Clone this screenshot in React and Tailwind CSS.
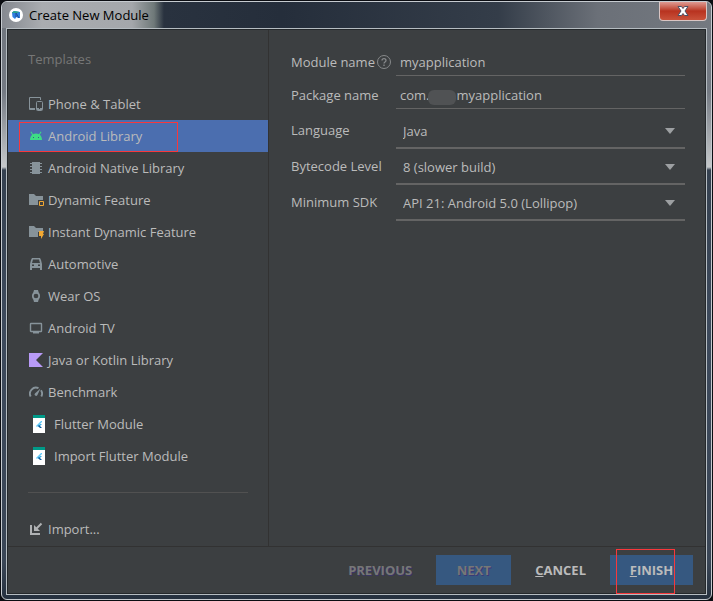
import React from "react";

const grey = "#87939a";

function PhoneTabletIcon() {
  return (
    <svg width="14" height="14" viewBox="0 0 14 14" fill="none">
      <path d="M.5 11V.5h11V3" stroke={grey} />
      <path d="M0 11h6v2H1a1 1 0 0 1-1-1z" fill={grey} />
      <rect x="7.500" y="4.500" width="6" height="9" rx="1" stroke={grey} />
      <path d="M8 11h5v2H8z" fill={grey} />
      <path d="M10 11h1v1h-1z" fill="#3c3f41" />
    </svg>
  );
}

function AndroidIcon() {
  return (
    <svg width="14" height="14" viewBox="0 0 14 14">
      <path d="M1 11c0-2 .8-4 2.200-5.200L1.500 3l.8-.5L4 5.200c1.800-.9 4.200-.9 6 0l1.700-2.700.8.5-1.700 2.800C12.200 7 13 9 13 11z" fill="#3ddc84" />
      <path d="M4 8h1v1H4zM9 8h1v1H9z" fill="#35598f" />
    </svg>
  );
}

function ChipIcon() {
  return (
    <svg width="14" height="14" viewBox="0 0 14 14" fill={grey}>
      <path d="M3 1h8v12H3z" />
      <path d="M1 2h12v1H1zM1 5h12v1H1zM1 8h12v1H1zM1 11h12v1H1z" />
    </svg>
  );
}

function FolderIcon({ instant }) {
  return (
    <svg width="15" height="14" viewBox="0 0 15 14" className="shrink-0">
      <path d="M0 1h5l2 2h7v4H9v5H0z" fill={grey} />
      {instant ? (
        <path d="M10 6h5l-1 3h1l-3 5v-3h-2z" fill="#f0a732" />
      ) : (
        <path d="M10.500 8.500h4v4h-4z" fill="none" stroke="#f0a732" />
      )}
    </svg>
  );
}

function CarIcon() {
  return (
    <svg width="14" height="14" viewBox="0 0 14 14">
      <path
        fill={grey}
        fillRule="evenodd"
        d="M3 1h8l1 2 1 4v6h-2v-2H3v2H1V7l1-4zM4 2.500L3 6h8l-1-3.500zM3 7.500v1.500h2V7.500zM9 7.500v1.500h2V7.500z"
      />
    </svg>
  );
}

function WatchIcon() {
  return (
    <svg width="14" height="14" viewBox="0 0 14 14">
      <path d="M5 1h4l.8 3H4.200zM5 13h4l.8-3H4.200z" fill={grey} />
      <circle cx="7" cy="7" r="3.200" fill="#3c3f41" stroke={grey} strokeWidth="1.700" />
    </svg>
  );
}

function TvIcon() {
  return (
    <svg width="14" height="14" viewBox="0 0 14 14">
      <rect x="1.500" y="2.500" width="11" height="8" rx=".5" fill="none" stroke={grey} strokeWidth="1.400" />
      <path d="M4 11h6v1.500H4z" fill={grey} />
    </svg>
  );
}

function KotlinIcon() {
  return (
    <svg width="14" height="14" viewBox="0 0 14 14">
      <path d="M0 0h14L7 7l7 7H0z" fill="#b99bf8" />
    </svg>
  );
}

function GaugeIcon() {
  return (
    <svg width="14" height="14" viewBox="0 0 14 14" fill="none">
      <path d="M1.700 11.500A6 6 0 0 1 9.500 3.200M12 5.200a6 6 0 0 1 .3 6.300" stroke={grey} strokeWidth="1.900" />
      <path d="M11.500 3.500L8.300 10.300a1.500 1.500 0 0 1-2.400-1.900z" fill={grey} />
    </svg>
  );
}

function FlutterIcon() {
  return (
    <svg width="12" height="18" viewBox="0 0 12 18">
      <path d="M0 0h12v18H0z" fill="#fff" />
      <path d="M0 0h12v3H0z" fill="#009a88" />
      <path d="M8 6L3 11l1 1 5-5V6z" fill="#5fc9f8" />
      <path d="M7 9l-2 2 1 1 3-3z" fill="#3ab0e6" />
      <path d="M5 11l2 2h2l-2-2-1-1z" fill="#0d5a9c" />
    </svg>
  );
}

function ImportIcon() {
  return (
    <svg width="14" height="14" viewBox="0 0 14 14" fill="none">
      <path d="M2 3v9h9" stroke="#afb1b3" strokeWidth="2" />
      <path d="M12.500 1.500L7 7" stroke="#afb1b3" strokeWidth="2" />
      <path d="M5 3v6h6z" fill="#afb1b3" />
    </svg>
  );
}

const templates = [
  { name: "Phone & Tablet", Icon: PhoneTabletIcon },
  { name: "Android Library", Icon: AndroidIcon, selected: true },
  { name: "Android Native Library", Icon: ChipIcon },
  { name: "Dynamic Feature", Icon: FolderIcon },
  { name: "Instant Dynamic Feature", Icon: FolderIcon, instant: true },
  { name: "Automotive", Icon: CarIcon },
  { name: "Wear OS", Icon: WatchIcon },
  { name: "Android TV", Icon: TvIcon },
  { name: "Java or Kotlin Library", Icon: KotlinIcon },
  { name: "Benchmark", Icon: GaugeIcon },
  { name: "Flutter Module", Icon: FlutterIcon, wide: true },
  { name: "Import Flutter Module", Icon: FlutterIcon, wide: true },
];

function TemplateRow({ name, Icon, selected, instant, wide }) {
  return (
    <li>
      <button
        type="button"
        className={
          "relative flex h-8 w-full items-center pl-5 text-left " + (selected ? "bg-[#4b6eaf]" : "")
        }
      >
        <span className={"flex shrink-0 " + (wide ? "w-[26px] pl-[5px]" : "w-5 pl-px")}>
          <Icon instant={instant} />
        </span>
        {name}
        {selected && (
          <span className="absolute top-0.5 bottom-0 left-[11px] w-[159px] border border-[#f8383c]" />
        )}
      </button>
    </li>
  );
}

function SelectRow({ id, label, value }) {
  return (
    <div className="flex items-start">
      <label htmlFor={id} className="w-[105px] shrink-0 leading-[30px]">
        {label}
      </label>
      <div className="relative flex-1">
        <select
          id={id}
          defaultValue={value}
          className="block h-[34px] w-full appearance-none border-b-2 border-[#646464] bg-transparent pb-px pl-[7px] outline-none"
        >
          <option>{value}</option>
        </select>
        <svg className="pointer-events-none absolute top-[13px] right-[10px]" width="10" height="6" viewBox="0 0 10 6">
          <path d="M0 0h10L5 6z" fill="#9da0a2" />
        </svg>
      </div>
    </div>
  );
}

const inputClass =
  "block h-[26px] w-full border-b border-[#646464] bg-transparent pb-px pl-1 outline-none";

export default function App() {
  return (
    <div className="flex min-h-screen flex-col bg-[#0b0d12] p-px font-['Open_Sans',sans-serif] text-[13px] leading-5 text-[#bbbbbb]">
      <div className="flex flex-1 flex-col rounded-md border border-[#c6cbd0] bg-[linear-gradient(to_bottom,#6f757d_0px,#747a83_90px,#c5c8ca_165px,#354150_168px,#3d4a5c_320px,#3a4656_560px,#25303e_100%)] px-1 pb-1">
        <header className="-mx-1 flex h-[26px] items-center rounded-t-md bg-[linear-gradient(to_right,#858990_0px,#a9acb0_40px,#a4a7ab_130px,#6f7979_152px,#29323f_162px,#252e3b_280px,#343d49_70%,#6b7078_84%,#747980_100%)] pl-[7px]">
          <svg width="14" height="14" viewBox="0 0 14 14">
            <circle cx="7" cy="7" r="7" fill="#fff" />
            <path d="M3 4.500L5 3l6 1v6H9L7.500 9 6 11 3.500 9z" fill="#2f7fe0" />
            <path d="M3 4.500L5 3l5 .8-1 1.200H3z" fill="#2ba38d" />
            <path d="M7 5l3 5M7 5v4" stroke="#1f4f99" />
          </svg>
          <h1 className="pl-1.5 text-black">Create New Module</h1>
          <button
            type="button"
            aria-label="Close"
            className="mr-1 ml-auto flex h-[19px] w-12 items-center justify-center self-start rounded-b border border-t-0 border-[#d9c5c3] bg-linear-to-b from-[#dd9a92] from-0% via-[#b8321f] via-50% to-[#c9513a]"
          >
            <svg width="12" height="10" viewBox="0 0 12 10">
              <path d="M1 .5h3.500L6 2.500 7.500.5H11L8 5l3 4.500H7.500L6 7.500 4.500 9.500H1L4 5z" fill="#fff" stroke="#4b4f63" />
            </svg>
          </button>
        </header>

        <div className="flex flex-1 flex-col border border-[#b5bcc1]">
          <div className="flex flex-1 flex-col border border-[#24282b] bg-[#3c3f41]">
            <div className="flex flex-1">
              <nav aria-label="Templates" className="flex w-[261px] shrink-0 flex-col border-r border-[#323232]">
                <h2 className="mt-[19px] pl-5 text-[#777777]">Templates</h2>
                <ul className="mt-[19px]">
                  {templates.map((t) => (
                    <TemplateRow key={t.name} {...t} />
                  ))}
                </ul>
                <hr className="mx-5 mt-5 border-[#515151]" />
                <button type="button" className="mt-5 flex h-8 items-center pl-5">
                  <span className="flex w-5 pl-px">
                    <ImportIcon />
                  </span>
                  Import...
                </button>
              </nav>

              <form className="flex-1 pt-5 pr-5 pl-[22px]">
                <div className="flex items-start">
                  <label htmlFor="module" className="flex h-6 w-[105px] shrink-0 items-center gap-0.5">
                    Module name
                    <svg width="14" height="14" viewBox="0 0 14 14" fill="none" stroke="#87898b" className="shrink-0">
                      <circle cx="7" cy="7" r="6.500" />
                      <path d="M5 5.500c0-2.600 4-2.600 4 0C9 7 7 7 7 8.500M7 9.500V11" strokeWidth="1.300" />
                    </svg>
                  </label>
                  <div className="flex-1">
                    <input id="module" defaultValue="myapplication" className={inputClass} />
                  </div>
                </div>
                <div className="mt-[7px] flex items-start">
                  <label htmlFor="package" className="flex h-6 w-[105px] shrink-0 items-center">
                    Package name
                  </label>
                  <div className="relative flex-1">
                    <input
                      id="package"
                      defaultValue={"com." + "\u00a0".repeat(8) + "myapplication"}
                      className={inputClass}
                    />
                    <span className="absolute top-[7px] left-8 h-[15px] w-7 rounded-md bg-[#505254]" />
                  </div>
                </div>
                <div className="mt-1.5 flex flex-col gap-0.5">
                  <SelectRow id="language" label="Language" value="Java" />
                  <SelectRow id="bytecode" label="Bytecode Level" value="8 (slower build)" />
                  <SelectRow id="sdk" label="Minimum SDK" value="API 21: Android 5.0 (Lollipop)" />
                </div>
              </form>
            </div>

            <footer className="flex h-[47px] items-center justify-end border-t border-[#323232] pr-3 font-bold">
              <button type="button" disabled className="mr-6 text-[#777777] [text-shadow:1px_1px_#3a3566]">
                PREVIOUS
              </button>
              <button
                type="button"
                disabled
                className="mr-6 h-[30px] w-[75px] bg-[#365880] text-[#777777] [text-shadow:1px_1px_#3a3a78]"
              >
                NEXT
              </button>
              <button type="button" className="mr-6">
                <span className="underline">C</span>ANCEL
              </button>
              <button type="button" className="relative h-[30px] w-[83px] bg-[#365880]">
                <span className="underline">F</span>INISH
                <span className="absolute -top-1.5 left-1.5 h-[45px] w-[59px] border border-[#f8383c]" />
              </button>
            </footer>
          </div>
        </div>
      </div>
    </div>
  );
}
